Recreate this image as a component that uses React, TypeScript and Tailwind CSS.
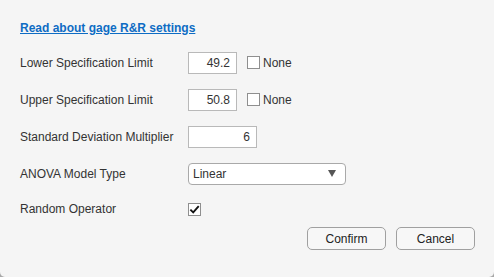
import { useState } from "react";

function Check({ checked }: { checked: boolean }) {
  return (
    <span className="flex h-[13px] w-[13px] items-center justify-center border border-[#8f8f8f] bg-white">
      {checked && (
        <svg viewBox="0 0 12 12" className="h-[11px] w-[11px]">
          <path d="M1.5 6.2 L4.6 9.2 L10.6 2.4" fill="none" stroke="#111" strokeWidth="2" />
        </svg>
      )}
    </span>
  );
}

function Row({ label, children, h = "h-[37px]" }: { label: string; children?: React.ReactNode; h?: string }) {
  return (
    <div className={`flex items-center ${h}`}>
      <div className="w-[168px] shrink-0">{label}</div>
      {children}
    </div>
  );
}

function NumBox({ value, w }: { value: string; w: string }) {
  return (
    <div className={`flex h-[22px] ${w} items-center justify-end border border-[#b9b9b9] bg-white pr-[6px]`}>
      {value}
    </div>
  );
}

export default function App() {
  const [random] = useState(true);
  return (
    <div className="h-[277px] w-[494px] bg-[#a8a8a8]">
      <div
        className="h-[277px] w-[494px] rounded-b-[5px] bg-[#f5f5f5] px-[20px] pt-[20px] text-[12px] text-[#333333]"
        style={{ fontFamily: '"Liberation Sans", Arial, sans-serif' }}
      >
        <a className="block h-[16px] leading-[16px] font-bold text-[#0e6cc4] underline">
          Read about gage R&amp;R settings
        </a>
        <div className="mt-[8px]">
          <Row label="Lower Specification Limit">
            <NumBox value="49.2" w="w-[49px]" />
            <div className="ml-[10px] flex items-center gap-[3px]">
              <Check checked={false} />
              <span>None</span>
            </div>
          </Row>
          <Row label="Upper Specification Limit">
            <NumBox value="50.8" w="w-[49px]" />
            <div className="ml-[10px] flex items-center gap-[3px]">
              <Check checked={false} />
              <span>None</span>
            </div>
          </Row>
          <Row label="Standard Deviation Multiplier">
            <NumBox value="6" w="w-[69px]" />
          </Row>
          <Row label="ANOVA Model Type">
            <div className="flex h-[22px] w-[158px] items-center justify-between rounded-[4px] border border-[#a9a9a9] bg-white pl-[4px] pr-[9px]">
              <span>Linear</span>
              <svg viewBox="0 0 8 7" className="h-[7px] w-[8px]">
                <path d="M0 0 L8 0 L4 7 Z" fill="#555" />
              </svg>
            </div>
          </Row>
          <Row label="Random Operator" h="h-[34px]">
            <Check checked={random} />
          </Row>
        </div>
        <div className="mt-[1px] flex justify-end gap-[10px]">
          <button className="h-[23px] w-[79px] rounded-[5px] border border-[#a0a0a0] bg-[#f7f7f7] text-[12px] text-[#222]">
            Confirm
          </button>
          <button className="mr-[-1px] h-[23px] w-[79px] rounded-[5px] border border-[#a0a0a0] bg-[#f7f7f7] text-[12px] text-[#222]">
            Cancel
          </button>
        </div>
      </div>
    </div>
  );
}
